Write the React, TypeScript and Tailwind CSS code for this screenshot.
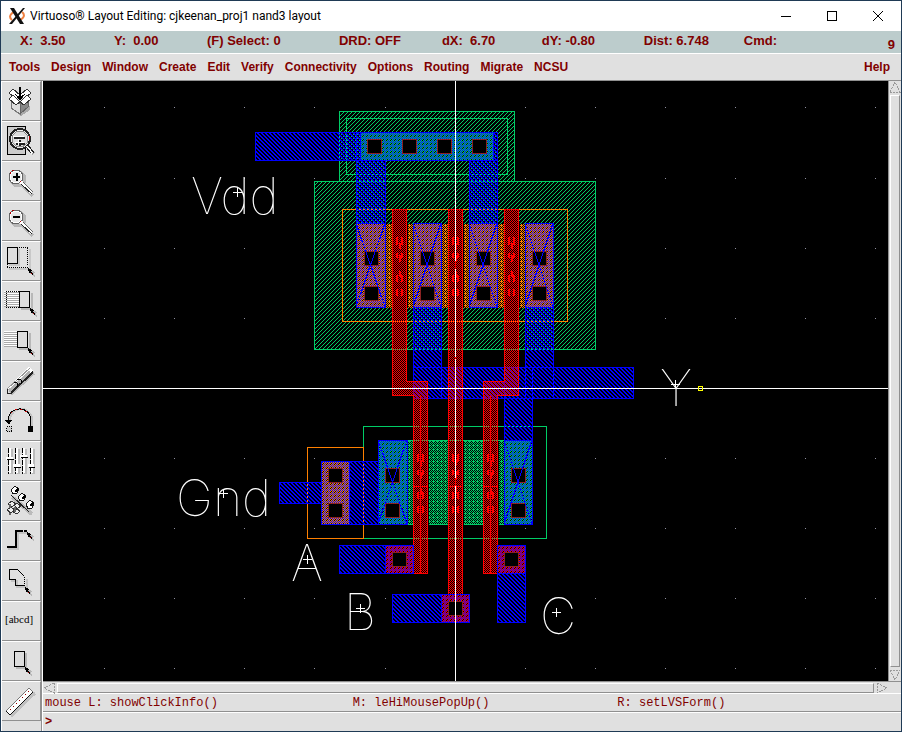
import type { ReactNode } from "react";

const MENUS = ["Tools", "Design", "Window", "Create", "Edit", "Verify", "Connectivity", "Options", "Routing", "Migrate", "NCSU"];

const STATUS = ["X:  3.50", "Y:  0.00", "(F) Select: 0", "DRD: OFF", "dX:  6.70", "dY: -0.80", "Dist: 6.748", "Cmd:"];

/* ---------- toolbar icons, drawn on a 38 x 38 button face ---------- */

function Cursor({ x, y }: { x: number; y: number }) {
  return (
    <g transform={`translate(${x} ${y})`}>
      <path d="M2 2l5 2-1 1 1 3-1 1-3-4-1 2z" fill="#b8b8b8" />
      <path d="M0 0l4 2-1 1 2 3-1 1-2-3-1 2z" fill="#000" />
      <path d="M3 5h1v1h-1z" fill="#a00000" />
    </g>
  );
}

function Magnifier({ plus }: { plus?: boolean }) {
  return (
    <>
      <circle cx="18" cy="19" r="7" fill="none" stroke="#b8b8b8" strokeWidth="3" />
      <path d="M23 26l10 10" stroke="#b8b8b8" strokeWidth="3" />
      <circle cx="16" cy="17" r="7" fill="#e8e8e8" stroke="#666" strokeWidth="1" />
      <circle cx="16" cy="17" r="6" fill="#e8e8e8" stroke="#fff" strokeWidth="1" />
      <path d="M10 14a7 7 0 0 1 4-4M20 22l2-1" stroke="#b00000" fill="none" strokeDasharray="2 2" />
      <path d="M21 22l11 11" stroke="#fff" strokeWidth="3" />
      <path d="M23 22l10 10" stroke="#666" fill="none" />
      <path d="M21 24l11 10" stroke="#222" fill="none" />
      <path d="M13 17h7" stroke="#000" strokeWidth="2" />
      {plus && <path d="M16.500 13v8" stroke="#000" strokeWidth="2" />}
    </>
  );
}

const TOOLS: { label: string; art: ReactNode }[] = [
  {
    label: "Save",
    art: (
      <>
        <path d="M12 24l9 9 9-7v4l-9 6-9-7z" fill="#aaa" />
        <path d="M11 18l9 6v10l-9-6z" fill="#ddd" stroke="#777" />
        <path d="M20 24l8-6v9l-8 7z" fill="#888" stroke="#666" />
        <path d="M9 13l4-4 7 6-4 4zM31 13l-4-4-7 6 4 4z" fill="#fff" stroke="#333" />
        <path d="M9 19l4-4 7 7-4 3zM31 19l-4-4-7 7 4 3z" fill="#fff" stroke="#333" />
        <path d="M20 7v11" stroke="#000" strokeWidth="2" />
        <path d="M15 14l5 7 5-7-5 3z" fill="#000" />
      </>
    ),
  },
  {
    label: "Fit view",
    art: (
      <>
        <path d="M7.500 6.500h18v28h-18z" fill="#ccc" stroke="#000" />
        <path d="M28 28l6 6" stroke="#aaa" strokeWidth="4" />
        <circle cx="20" cy="19" r="10" fill="#eee" stroke="#222" strokeWidth="2" />
        <circle cx="20" cy="19" r="8" fill="#ddd" stroke="#888" />
        <path d="M29 16l1 4" stroke="#b00000" fill="none" />
        <path d="M14 18h11M16 24h9M20 20v6" stroke="#222" strokeWidth="2" />
        <path d="M13 16.500h11M15 22.500h9M18.500 19v6" stroke="#fff" />
        <path d="M27 26l6 7" stroke="#fff" strokeWidth="3" />
        <path d="M28 25l6 8M26 27l5 6" stroke="#222" />
      </>
    ),
  },
  { label: "Zoom in", art: <Magnifier plus /> },
  { label: "Zoom out", art: <Magnifier /> },
  {
    label: "Stretch",
    art: (
      <>
        <path d="M19 9v16h-10M30 9v20h-21" stroke="#c8c8c8" strokeWidth="2" fill="none" />
        <path d="M19 7.500h9M27.500 8v18M28 27.500H7M7.500 24v3" stroke="#000" strokeDasharray="1 1" fill="none" />
        <path d="M7.500 7.500h10v16h-10z" fill="#ddd" stroke="#000" />
        <Cursor x={28} y={28} />
      </>
    ),
  },
  {
    label: "Copy",
    art: (
      <>
        <path d="M4 12.500h15M4 14.500h15M4 16.500h15M4 18.500h15M4 20.500h15M4 22.500h15M4 24.500h15M4 26.500h15" stroke="#aaa" />
        <path d="M4 11.500h15M4 13.500h15M4 15.500h15M4 17.500h15M4 19.500h15M4 21.500h15M4 23.500h15M4 25.500h15" stroke="#fff" />
        <path d="M19 11.500H6.500v16H19" stroke="#000" fill="none" strokeDasharray="1 1" />
        <path d="M21 29h11V13" stroke="#b8b8b8" strokeWidth="2" fill="none" />
        <path d="M19.500 11.500h10v16h-10z" fill="#ddd" stroke="#000" />
        <Cursor x={30} y={28} />
      </>
    ),
  },
  {
    label: "Move",
    art: (
      <>
        <path d="M4 12.500h13M4 14.500h13M4 16.500h13M4 18.500h13M4 20.500h13M4 22.500h13M4 24.500h13M4 26.500h13" stroke="#aaa" />
        <path d="M4 11.500h13M4 13.500h13M4 15.500h13M4 17.500h13M4 19.500h13M4 21.500h13M4 23.500h13M4 25.500h13" stroke="#fff" />
        <path d="M19 29h11V13" stroke="#b8b8b8" strokeWidth="2" fill="none" />
        <path d="M17.500 11.500h10v16h-10z" fill="#ddd" stroke="#000" />
        <Cursor x={28} y={28} />
      </>
    ),
  },
  {
    label: "Delete",
    art: (
      <>
        <path d="M11 34L34 13" stroke="#b8b8b8" strokeWidth="3" />
        <path d="M9 31L31 9" stroke="#fff" strokeWidth="6" />
        <path d="M9 31L30 12" stroke="#b0b0b0" strokeWidth="3" />
        <path d="M7 29L30 8" stroke="#999" />
        <path d="M11 33L33 12" stroke="#222" strokeWidth="2" />
        <path d="M7 29v4h5" fill="none" stroke="#222" strokeWidth="1" />
        <path d="M14 22l3 1v4M17 19l4 1v4" fill="none" stroke="#000" />
      </>
    ),
  },
  {
    label: "Undo",
    art: (
      <>
        <path d="M10 22V19a11 11 0 0 1 22 2v6" fill="none" stroke="#c4c4c4" strokeWidth="2" />
        <path d="M8.500 22V18a11 10 0 0 1 22 2v7" fill="none" stroke="#000" />
        <path d="M11 13a10 9 0 0 1 17 1" fill="none" stroke="#c00000" strokeDasharray="2 3" />
        <path d="M5 20h7l-3 5z" fill="#000" />
        <path d="M28 26h5v6h-5z" fill="#000" />
        <path d="M6.500 26.500h5v5h-5z" fill="#ccc" stroke="#000" strokeDasharray="1 1" />
      </>
    ),
  },
  {
    label: "Properties",
    art: (
      <>
        <path d="M11 9v25M18 9v25M25 9v25M33 9v25" stroke="#bbb" strokeWidth="3" />
        <path d="M10 8v25M17 8v25M24 8v25M32 8v25" stroke="#fff" strokeWidth="2" />
        <path d="M8.500 8v26M15.500 8v26M22.500 8v26M30.500 8v26" stroke="#000" strokeDasharray="5 1" />
        <path d="M6 18h7M13 25h7M20 16h7M28 25h6" stroke="#fff" strokeWidth="3" />
        <path d="M7 19.500h7M14 27.500h7M21 17.500h7M29 27.500h6" stroke="#000" />
      </>
    ),
  },
  {
    label: "Instance",
    art: (
      <>
        <path d="M12 17l20 17" stroke="#bbb" strokeWidth="4" />
        <path d="M11 15l18 17" stroke="#222" />
        <g fill="#fff" stroke="#111">
          <path d="M11 10l4-4 4 3-2 4-4 1z" />
          <path d="M18 17l4-4 4 3-2 4-4 1z" />
          <path d="M26 24l4-4 4 3-2 5-4 1z" />
        </g>
        <path d="M15 12l3-3M22 19l3-3M30 26l3-3" stroke="#000" strokeWidth="2" />
        <g fill="#eee" stroke="#333">
          <path d="M8 24l4-3 4 3-4 3zM14 25l3-2 4 3-4 3zM7 30l4-3 4 3-4 3zM13 32l4-3 3 2-3 3z" />
        </g>
        <path d="M10 24v4M15 27v5M10 33v2" stroke="#666" strokeWidth="2" />
      </>
    ),
  },
  {
    label: "Path",
    art: (
      <>
        <path d="M8 29h10V13h10" stroke="#c4c4c4" strokeWidth="2" fill="none" />
        <path d="M7 27h9V11h4" stroke="#000" strokeWidth="2" fill="none" />
        <path d="M20 11h8" stroke="#000" strokeWidth="2" strokeDasharray="3 1" />
        <Cursor x={27} y={12} />
      </>
    ),
  },
  {
    label: "Polygon",
    art: (
      <>
        <path d="M11 21h6v6h10V19" stroke="#c4c4c4" strokeWidth="2" fill="none" />
        <path d="M24.500 25.500h-9v-6h-6v-10h8l7 7" stroke="#000" fill="none" />
        <path d="M24.500 17v9" stroke="#000" strokeDasharray="1 1" />
        <Cursor x={25} y={27} />
      </>
    ),
  },
  {
    label: "Label",
    art: (
      <text x="5" y="23" fontSize="11" className="font-['Liberation_Serif',serif]" fill="#000">
        [abcd]
      </text>
    ),
  },
  {
    label: "Rectangle",
    art: (
      <>
        <path d="M16 28h10V13" stroke="#b8b8b8" strokeWidth="2" fill="none" />
        <path d="M14.500 11.500h10v15h-10z" fill="#ddd" stroke="#000" />
        <Cursor x={25} y={27} />
      </>
    ),
  },
  {
    label: "Ruler",
    art: (
      <>
        <path d="M11 36L35 13" stroke="#c0c0c0" strokeWidth="3" />
        <path d="M6 31L29 8l4 4L10 35z" fill="#fff" stroke="#777" />
        <path d="M33 12L10 35l-4-4" fill="none" stroke="#111" />
        <path d="M10 29l1 1M13 26l1 1M16 23l1 1M19 20l1 1M22 17l1 1M25 14l1 1M28 11l1 1" stroke="#900" />
      </>
    ),
  },
];

function ToolButton({ label, children }: { label: string; children: ReactNode }) {
  return (
    <button
      aria-label={label}
      className="block h-10 w-full border-r border-b border-t border-r-[#909090] border-b-[#909090] border-t-white bg-[#e0e0e0]"
    >
      <svg className="block h-[38px] w-[38px]" viewBox="2 2 38 38" shapeRendering="crispEdges">
        {children}
      </svg>
    </button>
  );
}

/* ---------- layout drawing ---------- */

type Box = [number, number, number, number];

const WELL: Box[] = [
  [339, 111, 514, 181],
  [314, 181, 595, 349],
];
const METAL: Box[] = [
  [255, 132, 497, 160],
  [356, 132, 385, 307],
  [469, 132, 497, 307],
  [413, 223, 441, 398],
  [525, 223, 553, 398],
  [413, 367, 633, 398],
  [504, 367, 532, 524],
  [321, 461, 378, 524],
  [279, 482, 349, 503],
  [339, 545, 413, 573],
  [392, 594, 469, 622],
  [497, 545, 525, 622],
];
const POLY: Box[] = [
  [392, 209, 407, 396],
  [407, 381, 428, 396],
  [413, 396, 428, 573],
  [448, 209, 463, 594],
  [504, 209, 519, 396],
  [483, 381, 504, 396],
  [483, 396, 498, 573],
];
const P_CONTACTS: Box[] = [
  [356, 223, 385, 307],
  [413, 223, 441, 307],
  [469, 223, 497, 307],
  [525, 223, 553, 307],
];
const N_CONTACTS: Box[] = [
  [378, 440, 407, 524],
  [504, 440, 532, 524],
];
const POLY_CONTACTS: Box[] = [
  [385, 545, 413, 573],
  [441, 594, 469, 622],
  [497, 545, 525, 573],
];
const CUTS: [number, number][] = [
  [367, 139], [402, 139], [437, 139], [472, 139],
  [364, 251], [364, 286], [420, 251], [420, 286], [476, 251], [476, 286], [532, 251], [532, 286],
  [328, 468], [328, 503], [385, 468], [385, 503], [511, 468], [511, 503],
  [392, 552], [504, 552], [448, 601],
];
const GATES: Box[] = [
  [392, 223, 407, 307],
  [448, 223, 463, 307],
  [504, 223, 519, 307],
  [413, 440, 428, 524],
  [448, 440, 463, 524],
  [483, 440, 498, 524],
];
const GRID_X = [104, 174, 244, 314, 385, 455, 525, 595, 665, 735, 805, 875];
const GRID_Y = [107, 178, 248, 318, 388, 458, 528, 598, 668];
const LABELS: { text: string; x: number; y: number; px: number; py: number }[] = [
  { text: "Vdd", x: 191, y: 214, px: 237, py: 192 },
  { text: "Gnd", x: 176, y: 516, px: 223, py: 493 },
  { text: "A", x: 291, y: 581, px: 307, py: 559 },
  { text: "B", x: 344, y: 630, px: 360, py: 608 },
  { text: "C", x: 540, y: 634, px: 556, py: 612 },
  { text: "Y", x: 660, y: 406, px: 675, py: 384 },
];

function Rects({ boxes, fill, stroke }: { boxes: Box[]; fill: string; stroke: string }) {
  return (
    <>
      {boxes.map(([x1, y1, x2, y2], i) => (
        <rect key={i} x={x1 + 0.5} y={y1 + 0.5} width={x2 - x1} height={y2 - y1} fill={fill} stroke={stroke} />
      ))}
    </>
  );
}

/* Two stipples interleaved: the diffusion colour on odd pixels, metal on most of the even ones. */
function ContactPattern({ id, color }: { id: string; color: string }) {
  return (
    <pattern id={id} width="4" height="4" patternUnits="userSpaceOnUse">
      <path d="M0 0h4v4H0z" fill="#0000ff" />
      <path d="M2 0h1v1H2zM3 3h1v1H3z" fill="#000" />
      <path d="M1 0h1v1H1zM3 0h1v1H3zM0 1h1v1H0zM2 1h1v1H2zM1 2h1v1H1zM3 2h1v1H3zM0 3h1v1H0zM2 3h1v1H2z" fill={color} />
    </pattern>
  );
}

function LayoutCanvas() {
  const crosses = [...P_CONTACTS, ...N_CONTACTS];
  return (
    <svg className="block min-w-0 flex-1 bg-black" role="img" aria-label="nand3 layout" shapeRendering="crispEdges">
      <defs>
        <pattern id="well" width="4" height="4" patternUnits="userSpaceOnUse">
          <path d="M0 3h1v1H0zM1 2h1v1H1zM2 1h1v1H2zM3 0h1v1H3z" fill="#00cc66" />
        </pattern>
        <pattern id="metal" width="4" height="4" patternUnits="userSpaceOnUse">
          <path d="M0 0h2v1H0zM1 1h2v1H1zM2 2h2v1H2zM3 3h1v1H3zM0 3h1v1H0z" fill="#0000ff" />
        </pattern>
        <pattern id="poly" width="2" height="2" patternUnits="userSpaceOnUse">
          <path d="M1 0h1v1H1zM0 1h1v1H0z" fill="#ff0000" />
        </pattern>
        <pattern id="pdiff" width="4" height="4" patternUnits="userSpaceOnUse">
          <path d="M1 0h1v1H1zM3 0h1v1H3zM0 1h1v1H0zM2 1h1v1H2zM1 2h1v1H1zM3 2h1v1H3zM0 3h1v1H0zM2 3h1v1H2zM1 1h1v1H1z" fill="#ff8000" />
        </pattern>
        <pattern id="ndiff" width="4" height="4" patternUnits="userSpaceOnUse">
          <path d="M1 0h1v1H1zM3 0h1v1H3zM0 1h1v1H0zM2 1h1v1H2zM1 2h1v1H1zM3 2h1v1H3zM0 3h1v1H0zM2 3h1v1H2zM1 1h1v1H1z" fill="#00cc66" />
        </pattern>
        <ContactPattern id="pcon" color="#ff8000" />
        <ContactPattern id="ncon" color="#00cc66" />
        <ContactPattern id="polycon" color="#ff0000" />
      </defs>
      <g transform="translate(-43 -81)">
        {GRID_Y.map((y) => GRID_X.map((x) => <rect key={`${x}-${y}`} x={x} y={y} width="1" height="1" fill="#9090a0" />))}

        <Rects boxes={WELL} fill="url(#well)" stroke="#00cc66" />
        <Rects boxes={[[346, 118, 507, 174], [363, 426, 546, 538]]} fill="none" stroke="#00cc66" />
        <Rects boxes={[[342, 209, 567, 321], [307, 447, 363, 538]]} fill="none" stroke="#ff8000" />
        <Rects boxes={[[356, 223, 553, 307]]} fill="url(#pdiff)" stroke="none" />
        <Rects boxes={[[378, 440, 532, 524]]} fill="url(#ndiff)" stroke="#00cc66" />

        <Rects boxes={METAL} fill="url(#metal)" stroke="#0000ff" />
        <Rects boxes={[[360, 132, 493, 160], ...N_CONTACTS]} fill="url(#ncon)" stroke="#0000ff" />
        <Rects boxes={[...P_CONTACTS, [321, 461, 349, 524]]} fill="url(#pcon)" stroke="#0000ff" />

        <Rects boxes={GATES} fill="#000" stroke="none" />
        {POLY.map(([x1, y1, x2, y2], i) => (
          <rect key={i} x={x1} y={y1} width={x2 - x1} height={y2 - y1} fill="url(#poly)" />
        ))}
        <path
          d="M392.500 396V209.500h14V381.500h21V573.500h-14V395.500h-21M448.500 594V209.500h14V594M518.500 396V209.500h-14V381.500h-21V573.500h14V395.500h21"
          fill="none"
          stroke="#ff0000"
        />
        <path
          d="M420.500 396v177M490.500 396v177"
          stroke="#ff0000"
          fill="none"
          strokeDasharray="64 3 10 2 110"
        />
        {GATES.map(([x, y], i) => (
          <g key={i} stroke="#ff0000">
            <path
              d={`M${x + 5} ${y + 14}v8M${x + 10} ${y + 14}v8M${x + 5} ${y + 30}v5M${x + 10} ${y + 30}v5M${x + 5} ${y + 52}v7M${x + 10} ${y + 52}v7M${x + 5} ${y + 66}v7M${x + 10} ${y + 66}v7`}
              strokeWidth="2"
            />
            <path d={`M${x + 8} ${y + 20}v6M${x + 8} ${y + 32}v7M${x + 8} ${y + 48}v6`} strokeWidth="2" />
          </g>
        ))}
        <path d="M413 486.500h15M448 486.500h15M483 486.500h15" stroke="#ff0000" />
        <Rects boxes={POLY_CONTACTS} fill="url(#polycon)" stroke="#0000ff" />

        {CUTS.map(([x, y]) => (
          <rect key={`${x}-${y}`} x={x + 0.5} y={y + 0.5} width="14" height="14" fill="#000" stroke="#8b2222" />
        ))}
        {crosses.map(([x1, y1, x2, y2], i) => (
          <path key={i} d={`M${x1} ${y1}L${x2} ${y2}M${x2} ${y1}L${x1} ${y2}`} stroke="#0000ff" />
        ))}

        <path d="M455.500 0v2000M0 388.500h4000" stroke="#fff" />
        <path d="M455.500 261v8M455.500 357v2M455.500 478v8" stroke="#ff0000" />

        <g fill="#fff" fontSize="50" className="font-['Inter',sans-serif] font-thin">
          {LABELS.map((l) => (
            <text key={l.text} x={l.x} y={l.y}>
              {l.text}
            </text>
          ))}
        </g>
        {LABELS.map((l) => (
          <path key={l.text} d={`M${l.px - 4} ${l.py + 0.5}h9M${l.px + 0.5} ${l.py - 4}v9`} stroke="#fff" />
        ))}
        <rect x="698.500" y="386.500" width="4" height="4" fill="none" stroke="#ffff00" />
      </g>
    </svg>
  );
}

/* ---------- window ---------- */

function TitleBar() {
  return (
    <header className="flex h-[30px] items-center bg-white pl-2">
      <svg className="h-4 w-4" viewBox="0 0 16 16">
        <path d="M3 12C-1 9 2 4 7 4M9 12c5 0 8-5 4-8" fill="none" stroke="#f08040" strokeWidth="2" />
        <path d="M1 0h4l10 16h-4z" fill="#111" />
        <path d="M14 0h2L3 16H0z" fill="#111" />
      </svg>
      <h1 className="ml-[5px] flex-1 truncate font-['Roboto',sans-serif] text-[12px] leading-4 text-black">
        Virtuoso® Layout Editing: cjkeenan_proj1 nand3 layout
      </h1>
      <div className="flex h-full">
        <button aria-label="Minimize" className="flex w-[46px] items-center justify-center">
          <svg className="h-[10px] w-[10px]" shapeRendering="crispEdges"><path d="M0 5.500h10" stroke="#000" /></svg>
        </button>
        <button aria-label="Maximize" className="flex w-[46px] items-center justify-center">
          <svg className="h-[10px] w-[10px]" shapeRendering="crispEdges"><path d="M.5 .5h9v9h-9z" fill="none" stroke="#000" /></svg>
        </button>
        <button aria-label="Close" className="flex w-[46px] items-center justify-center">
          <svg className="h-[10px] w-[10px]"><path d="M0 0l10 10M10 0L0 10" stroke="#000" /></svg>
        </button>
      </div>
    </header>
  );
}

function ArrowButton({ label, path }: { label: string; path: string }) {
  return (
    <button aria-label={label} className="h-3 w-3 shrink-0">
      <svg className="block h-3 w-3" viewBox="0 0 12 12" shapeRendering="crispEdges">
        <path d={path} fill="none" stroke="#999" strokeDasharray="2 1" />
      </svg>
    </button>
  );
}

export default function App() {
  return (
    <div className="flex min-h-screen flex-col border border-[#1f3a55] bg-[#e0e0e0] font-['Liberation_Sans',Arial,sans-serif] text-[#800000]">
      <TitleBar />

      <div className="grid h-[22px] grid-cols-[94fr_93fr_132fr_103fr_100fr_102fr_100fr_144fr_auto] items-center bg-[#bccccc] pr-[6px] pl-[19px] text-[13px] leading-4 font-bold whitespace-pre">
        {STATUS.map((s) => (
          <span key={s} className="-mt-0.5">{s}</span>
        ))}
        <span className="mt-1.5">9</span>
      </div>

      <nav className="flex h-[28px] items-center gap-[11px] border-t border-b border-t-white border-b-[#909090] pr-[11px] pl-2 text-[12px] leading-4 font-bold">
        {MENUS.map((m) => (
          <button key={m}>{m}</button>
        ))}
        <button className="ml-auto">Help</button>
      </nav>

      <div className="flex flex-1">
        <aside className="w-[41px] shrink-0 border-r border-l border-l-white border-r-[#909090]" aria-label="Tool bar">
          {TOOLS.map((t) => (
            <ToolButton key={t.label} label={t.label}>{t.art}</ToolButton>
          ))}
        </aside>

        <main className="flex min-w-0 flex-1 flex-col border-l border-white">
          <div className="flex flex-1">
            <LayoutCanvas />
            <div className="flex w-[13px] shrink-0 flex-col items-center gap-[2px] border-l border-[#909090]">
              <ArrowButton label="Scroll up" path="M1 11h10L6 1z" />
              <div className="w-[10px] flex-1 border border-t-white border-r-[#909090] border-b-[#909090] border-l-white" />
              <ArrowButton label="Scroll down" path="M1 1h10L6 11z" />
            </div>
          </div>
          <div className="flex h-[13px] items-center gap-[2px] border-t border-b border-t-[#909090] border-b-white pr-[13px]">
            <ArrowButton label="Scroll left" path="M11 1v10L1 6z" />
            <div className="h-[10px] flex-1 border border-t-white border-r-[#909090] border-b-[#909090] border-l-white" />
            <ArrowButton label="Scroll right" path="M1 1v10l10-5z" />
          </div>
          <div className="grid h-[18px] grid-cols-[308fr_265fr_284fr] items-center border-b border-[#909090] pl-[2px] font-['Liberation_Mono',monospace] text-[12px] leading-4">
            <span>mouse L: showClickInfo()</span>
            <span>M: leHiMousePopUp()</span>
            <span>R: setLVSForm()</span>
          </div>
          <label className="flex h-[19px] items-center border-t border-white pl-[2px] font-['Liberation_Mono',monospace] text-[12px] leading-4 font-bold">
            <span>&gt;</span>
            <input aria-label="Command" className="min-w-0 flex-1 bg-transparent outline-none" />
          </label>
        </main>
      </div>
    </div>
  );
}
